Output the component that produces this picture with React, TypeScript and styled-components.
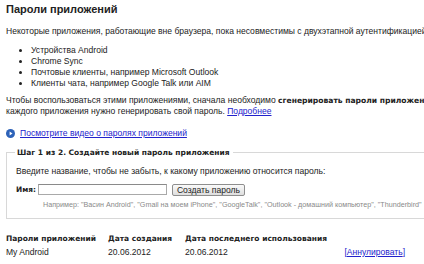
import React from 'react';
import styled, { createGlobalStyle } from 'styled-components';

const GlobalStyle = createGlobalStyle`
  html, body {
    margin: 0;
    padding: 0;
    background: #fff;
    overflow: hidden;
  }
  body {
    width: 424px;
    height: 264px;
  }
`;

const Page = styled.div`
  width: 418px;
  padding: 2px 0 0 6px;
  font-family: 'Liberation Sans', Arial, sans-serif;
  font-size: 8.55px;
  line-height: 11px;
  color: #222;
`;

const Title = styled.h1`
  margin: 0 0 9.5px;
  font-size: 11px;
  line-height: 14px;
  font-weight: bold;
  color: #222;
`;

const Para = styled.p`
  margin: 0;
  white-space: nowrap;
`;

const Strong = styled.b`
  font-family: 'DejaVu Sans', Verdana, sans-serif;
  font-size: 7.6px;
`;

const Bullets = styled.ul`
  margin: 8px 0 6px;
  padding: 0 0 0 25px;
  list-style: disc;
  li {
    line-height: 11px;
  }
`;

const Link = styled.a`
  color: #2222cc;
  text-decoration: underline;
`;

const VideoRow = styled.div`
  display: flex;
  align-items: center;
  gap: 5px;
  margin: 11px 0 8px;
  line-height: 11px;
`;

const Fieldset = styled.fieldset`
  margin: 0;
  width: 480px;
  padding: 8px 9px 8px 9px;
  border: 1px solid #d8d8d8;
  border-right: none;
`;

const Legend = styled.legend`
  padding: 0 3px 0 2px;
  margin-left: -1px;
  font-family: 'DejaVu Sans', Verdana, sans-serif;
  font-weight: bold;
  font-size: 7.5px;
  line-height: 11px;
  color: #222;
`;

const Hint = styled.div`
  margin: 0;
`;

const FormRow = styled.div`
  display: flex;
  align-items: center;
  gap: 2px;
  margin-top: 7px;
  height: 12px;
`;

const Label = styled.label`
  font-family: 'DejaVu Sans', Verdana, sans-serif;
  font-weight: bold;
  font-size: 7.4px;
`;

const Input = styled.input`
  box-sizing: border-box;
  width: 129px;
  height: 11px;
  padding: 0 2px;
  margin: 0;
  border: 1px solid #a9a9a9;
  border-top-color: #8a8a8a;
  font-size: 8.5px;
`;

const Button = styled.button`
  box-sizing: border-box;
  height: 12px;
  margin: 0 0 0 3px;
  padding: 0 4px;
  font-family: 'Liberation Sans', Arial, sans-serif;
  font-size: 8.55px;
  line-height: 10px;
  color: #222;
  background: linear-gradient(#fafafa, #dedede);
  border: 1px solid #8e8e8e;
  border-radius: 2px;
`;

const Example = styled.div`
  margin: 4px 0 0 27px;
  font-size: 7.2px;
  line-height: 10px;
  color: #8a8a8a;
  white-space: nowrap;
`;

const Table = styled.table`
  margin-top: 14.5px;
  border-collapse: collapse;
  table-layout: fixed;
  width: 399px;
  th {
    text-align: left;
    font-family: 'DejaVu Sans', Verdana, sans-serif;
    font-weight: bold;
    font-size: 7.5px;
    line-height: 11px;
    padding: 0 0 3px;
    white-space: nowrap;
  }
  td {
    padding: 0;
    line-height: 11px;
    white-space: nowrap;
  }
`;

const Col = styled.col<{ $w: number }>`
  width: ${(p) => p.$w}px;
`;

const Revoke = styled.td`
  text-align: right;
  color: #2222cc;
`;

function PlayIcon() {
  return (
    <svg width="9" height="9" viewBox="0 0 10 10">
      <circle cx="5" cy="5" r="5" fill="#2d62b8" />
      <path d="M4 2.8 L7.2 5 L4 7.2 Z" fill="#fff" />
    </svg>
  );
}

export default function App() {
  return (
    <>
      <GlobalStyle />
      <Page>
        <Title>Пароли приложений</Title>
        <Para>
          Некоторые приложения, работающие вне браузера, пока несовместимы с двухэтапной аутентификацией.
        </Para>
        <Bullets>
          <li>Устройства Android</li>
          <li>Chrome Sync</li>
          <li>Почтовые клиенты, например Microsoft Outlook</li>
          <li>Клиенты чата, например Google Talk или AIM</li>
        </Bullets>
        <Para>
          Чтобы воспользоваться этими приложениями, сначала необходимо{' '}
          <Strong>сгенерировать пароли приложений</Strong> для
          <br />
          каждого приложения нужно генерировать свой пароль. <Link href="#">Подробнее</Link>
        </Para>
        <VideoRow>
          <PlayIcon />
          <Link href="#">Посмотрите видео о паролях приложений</Link>
        </VideoRow>
        <Fieldset>
          <Legend>Шаг 1 из 2. Создайте новый пароль приложения</Legend>
          <Hint>Введите название, чтобы не забыть, к какому приложению относится пароль:</Hint>
          <FormRow>
            <Label>Имя:</Label>
            <Input type="text" />
            <Button>Создать пароль</Button>
          </FormRow>
          <Example>
            Например: "Васин Android", "Gmail на моем iPhone", "GoogleTalk", "Outlook - домашний компьютер", "Thunderbird"
          </Example>
        </Fieldset>
        <Table>
          <colgroup>
            <Col $w={102} />
            <Col $w={77} />
            <Col $w={150} />
            <Col $w={70} />
          </colgroup>
          <thead>
            <tr>
              <th>Пароли приложений</th>
              <th>Дата создания</th>
              <th>Дата последнего использования</th>
              <th />
            </tr>
          </thead>
          <tbody>
            <tr>
              <td>My Android</td>
              <td>20.06.2012</td>
              <td>20.06.2012</td>
              <Revoke>
                [<Link href="#">Аннулировать</Link>]
              </Revoke>
            </tr>
          </tbody>
        </Table>
      </Page>
    </>
  );
}
